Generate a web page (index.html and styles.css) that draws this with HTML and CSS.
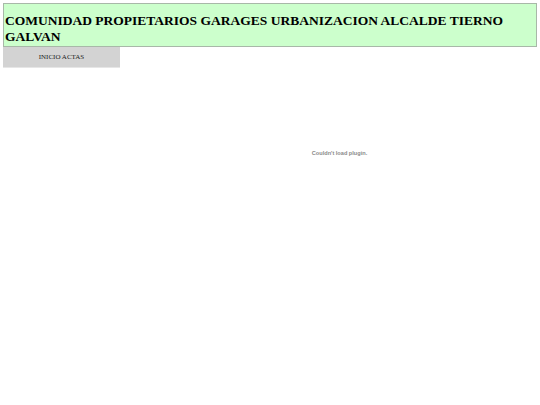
FILE: index.html
```html
<!DOCTYPE html>
<html>
<head>
<meta charset="utf-8">
<link rel="stylesheet" href="styles.css">
</head>
<body>
<div class="page">
  <header class="banner">
    <h1 class="title">COMUNIDAD PROPIETARIOS GARAGES URBANIZACION ALCALDE TIERNO GALVAN</h1>
  </header>
  <div class="main">
    <nav class="menu">
      <a class="menu-item">INICIO ACTAS</a>
    </nav>
    <div class="plugin">
      <span class="plugin-msg">Couldn't load plugin.</span>
    </div>
  </div>
</div>
</body>
</html>
```
FILE: styles.css
```css
html, body {
  margin: 0;
  padding: 0;
  background: #ffffff;
}
.page {
  padding: 3px;
}
.banner {
  background: #ccffcc;
  border: 1px solid #a8b8a8;
  height: 42px;
  box-sizing: content-box;
}
.title {
  margin: 0;
  padding: 9px 1px 0 1px;
  font-family: "Liberation Serif", "Times New Roman", serif;
  font-weight: bold;
  font-size: 13.5px;
  line-height: 16px;
  color: #000;
}
.main {
  display: flex;
}
.menu {
  width: 117px;
  flex: none;
}
.menu-item {
  display: block;
  height: 20px;
  line-height: 20px;
  background: #d3d3d3;
  text-align: center;
  font-family: "Liberation Serif", "Times New Roman", serif;
  font-size: 7px;
  color: #222;
  border-bottom: 1px solid #e6e6e6;
}
.plugin {
  flex: 1;
  height: 200px;
  display: flex;
  align-items: flex-start;
  justify-content: center;
  padding-top: 103px;
  padding-left: 22px;
}
.plugin-msg {
  font-family: "Liberation Sans", Arial, sans-serif;
  font-weight: bold;
  font-size: 5.6px;
  color: #8a8a8a;
}
```
